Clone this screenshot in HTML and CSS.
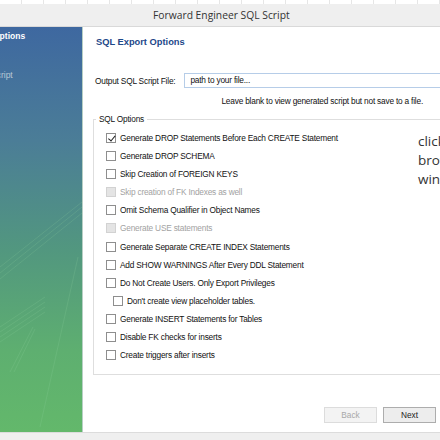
FILE: index.html
```html
<!DOCTYPE html>
<html lang="en">

<head>
  <meta charset="UTF-8">
  <title>Forward Engineer SQL Script</title>
  <link rel="stylesheet" href="styles.css">
</head>

<body>
  <div class="ruler"></div>
  <div class="titlebar">Forward Engineer SQL Script</div>

  <div class="main">
    <div class="sidebar">
      <div class="step current">Options</div>
      <div class="step">Script</div>
      <svg class="swoosh" width="82" height="405" viewBox="0 0 82 405">
        <g fill="none" stroke="#8fd0a0" stroke-opacity="0.2" stroke-width="1">
          <path d="M0 240 L82 175" />
          <path d="M0 246 L82 180" />
          <path d="M0 252 L82 186" />
          <path d="M0 300 L45 270" />
          <path d="M0 305 L45 275" />
          <path d="M0 310 L45 280" />
          <path d="M0 315 L45 285" />
          <path d="M10 345 L33 300" />
          <path d="M14 345 L35 302" />
          <path d="M40 400 L78 230" />
        </g>
      </svg>
    </div>

    <div class="content">
      <h4 class="heading">SQL Export Options</h4>

      <div class="filerow">
        <span>Output SQL Script File:</span>
        <div class="filebox">path to your file...</div>
      </div>
      <p class="hint">Leave blank to view generated script but not save to a file.</p>

      <fieldset class="options">
        <legend>SQL Options</legend>
        <label class="opt"><span class="box checked"></span>Generate DROP Statements Before Each CREATE Statement</label>
        <label class="opt"><span class="box"></span>Generate DROP SCHEMA</label>
        <label class="opt"><span class="box"></span>Skip Creation of FOREIGN KEYS</label>
        <label class="opt off"><span class="box"></span>Skip creation of FK Indexes as well</label>
        <label class="opt"><span class="box"></span>Omit Schema Qualifier in Object Names</label>
        <label class="opt off"><span class="box"></span>Generate USE statements</label>
        <label class="opt"><span class="box"></span>Generate Separate CREATE INDEX Statements</label>
        <label class="opt"><span class="box"></span>Add SHOW WARNINGS After Every DDL Statement</label>
        <label class="opt"><span class="box"></span>Do Not Create Users. Only Export Privileges</label>
        <label class="opt sub"><span class="box"></span>Don't create view placeholder tables.</label>
        <label class="opt"><span class="box"></span>Generate INSERT Statements for Tables</label>
        <label class="opt"><span class="box"></span>Disable FK checks for inserts</label>
        <label class="opt"><span class="box"></span>Create triggers after inserts</label>
      </fieldset>

      <div class="note">click<br>brow<br>win</div>

      <div class="buttons">
        <button class="btn" disabled>Back</button>
        <button class="btn">Next</button>
      </div>
    </div>
  </div>

  <div class="statusbar"></div>
</body>

</html>
```

FILE: styles.css
```css
body {
  margin: 0;
  width: 440px;
  height: 440px;
  overflow: hidden;
  background: #fff;
  font-family: "Liberation Sans", Arial, sans-serif;
  font-size: 8.3px;
  letter-spacing: -0.2px;
  color: #111;
}

.ruler {
  height: 4px;
  background: repeating-linear-gradient(90deg, #fff 0 21px, #e6e6e6 21px 22px);
}

.titlebar {
  height: 22px;
  line-height: 22px;
  background: #efefef;
  border-bottom: 1px solid #d9d9d9;
  font-family: "Open Sans", sans-serif;
  font-size: 10.3px;
  letter-spacing: 0;
  color: #333;
  padding-left: 153px;
}

.main {
  display: flex;
  height: 405px;
}

.sidebar {
  width: 82px;
  flex-shrink: 0;
  position: relative;
  border-right: 1px solid #b7cfc4;
  background: linear-gradient(180deg, #3e68a0 0%, #4b7d97 28%, #52977f 55%, #5eaf70 80%, #63b86b 100%);
  overflow: hidden;
  font-size: 8.5px;
  letter-spacing: 0;
}

.step {
  height: 19px;
  line-height: 19px;
  white-space: nowrap;
  color: #b9c9d6;
  margin-left: -9px;
}

.step.current {
  margin-left: -7px;
  color: #fff;
  font-weight: bold;
  margin-bottom: 20px;
}

.swoosh {
  position: absolute;
  left: 0;
  top: 0;
}

.content {
  flex: 1;
  position: relative;
  display: flex;
  flex-direction: column;
  padding-left: 10px;
}

.heading {
  margin: 10px 0 0 3px;
  color: #1d4889;
  font-size: 9.3px;
  letter-spacing: 0;
}

.filerow {
  display: flex;
  align-items: center;
  margin-top: 26px;
  margin-left: 2px;
}

.filebox {
  margin-left: 9px;
  flex: 1;
  height: 13px;
  line-height: 13px;
  border: 1px solid #b6cde8;
  border-right: 0;
  padding-left: 5px;
}

.hint {
  margin: 8px 17px 0 0;
  text-align: right;
}

.options {
  margin: 8px -2px 0 0;
  padding: 5px 0 0 12px;
  border: 1px solid #dedede;
  border-right: 0;
  height: 261px;
  box-sizing: border-box;
}

.options legend {
  padding: 0 3px;
  margin-left: -10px;
}

.opt {
  display: flex;
  align-items: center;
  height: 18.08px;
}

.box {
  width: 10px;
  height: 10px;
  box-sizing: border-box;
  border: 1px solid #8e8e8e;
  background: #fff;
  margin-right: 4px;
  position: relative;
}

.box.checked::after {
  content: "";
  position: absolute;
  left: 2.5px;
  top: 0;
  width: 2.5px;
  height: 5.5px;
  border: solid #222;
  border-width: 0 1.5px 1.5px 0;
  transform: rotate(40deg);
}

.opt.off {
  color: #a2a2a2;
}

.opt.off .box {
  background: #e4e4e4;
  border-color: #d2d2d2;
}

.opt.sub {
  padding-left: 7px;
}

.note {
  position: absolute;
  left: 335px;
  top: 105px;
  font-family: "Open Sans", sans-serif;
  font-size: 13.5px;
  line-height: 19px;
  letter-spacing: 0;
  color: #333;
}

.buttons {
  display: flex;
  justify-content: flex-end;
  gap: 6px;
  margin-top: auto;
  margin-bottom: 9px;
  margin-right: 4px;
}

.btn {
  width: 53px;
  height: 16px;
  padding: 0;
  font-family: "Liberation Sans", Arial, sans-serif;
  font-size: 8.3px;
  color: #222;
  background: #ededed;
  border: 1px solid #adadad;
}

.btn:disabled {
  color: #a8a8a8;
  background: #f3f3f3;
  border-color: #dcdcdc;
}

.statusbar {
  height: 8px;
  background: #efefef;
  border-top: 1px solid #dcdcdc;
}
```
